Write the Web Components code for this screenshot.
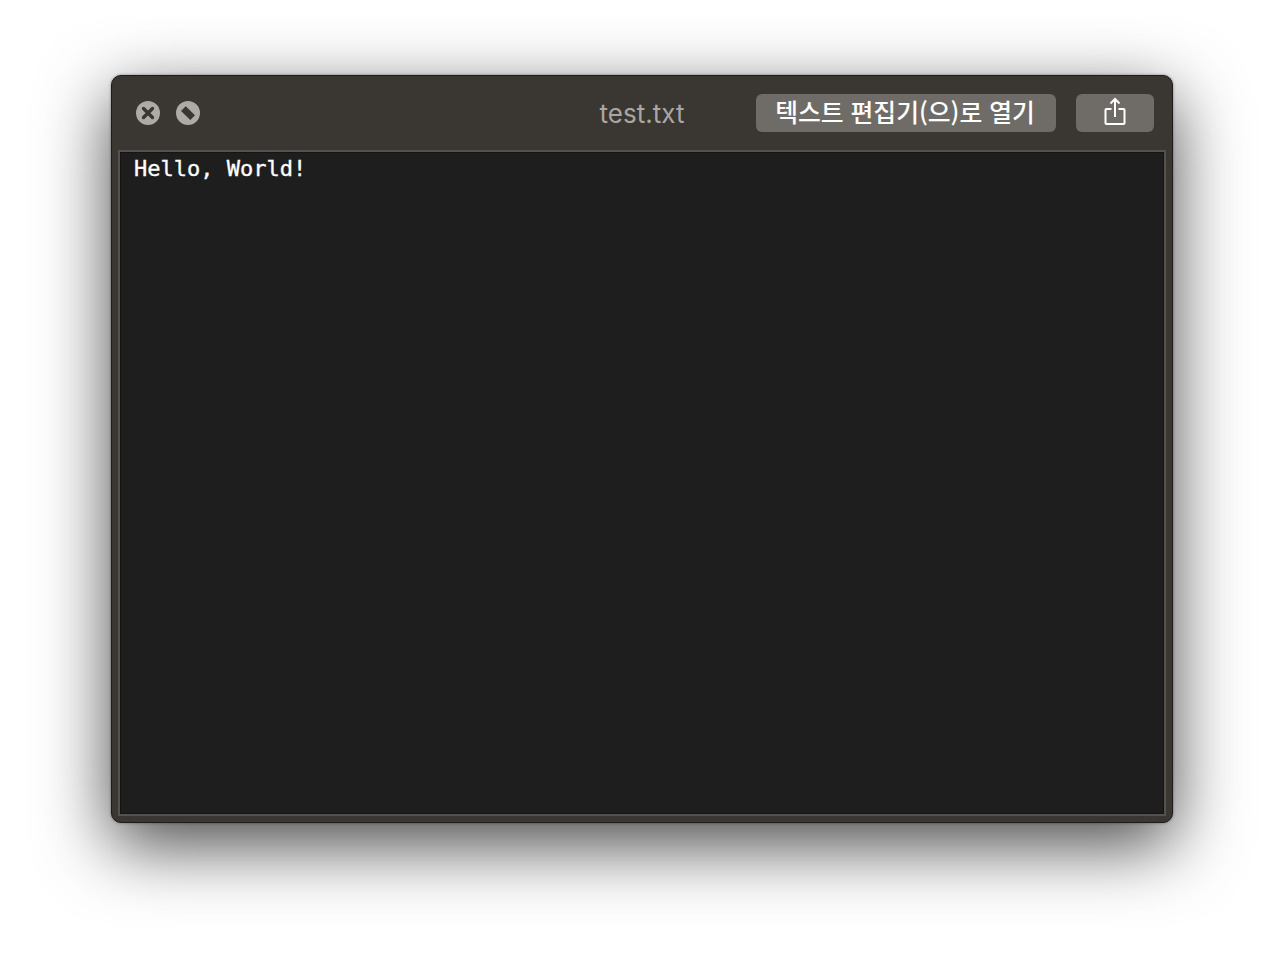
<!DOCTYPE html>
<html lang="ko">
<head>
<meta charset="utf-8">
<title>test.txt</title>
<style>
html, body { margin: 0; height: 100%; background: #fff; overflow: hidden; }
body { padding: 75px 111px 0; box-sizing: border-box; }
</style>
</head>
<body>
<preview-window>
  <circle-button slot="left" kind="close"></circle-button>
  <circle-button slot="left" kind="block"></circle-button>
  <span slot="title">test.txt</span>
  <bar-button slot="right" style="width:300px;padding-right:2px">텍스트 편집기(으)로 열기</bar-button>
  <bar-button slot="right" style="width:78px">
    <svg width="24" height="30" viewBox="0 0 24 30" fill="none" stroke="#fff" stroke-width="2">
      <path d="M8.500 13H3.500a1 1 0 0 0-1 1V27a1 1 0 0 0 1 1h17a1 1 0 0 0 1-1V14a1 1 0 0 0-1-1H15.500"/>
      <path d="M12 21V3M7.500 7.500 12 3l4.500 4.500"/>
    </svg>
  </bar-button>
  <text-pane>Hello, World!</text-pane>
</preview-window>
<script>
class PreviewWindow extends HTMLElement {
  constructor() {
    super();
    this.attachShadow({mode: 'open'});
    this.shadowRoot.innerHTML = `
      <style>
      :host {
        display: flex;
        flex-direction: column;
        box-sizing: border-box;
        width: 1062px;
        height: 748px;
        background: #3a3631;
        border: 1px solid #1d1c1a;
        border-radius: 10px;
        box-shadow: 0 22px 70px rgba(0,0,0,.72), 0 0 3px rgba(0,0,0,.4);
        padding: 0 6px 6px;
      }
      .bar {
        flex: none;
        height: 74px;
        display: grid;
        grid-template-columns: 1fr auto 1fr;
        align-items: center;
        padding: 0 12px;
        color: #aaa7a2;
        font: 26px "Inter", "Noto Sans", sans-serif;
      }
      .left { display: flex; gap: 16px; padding-left: 6px; }
      .right { display: flex; gap: 20px; justify-content: flex-end; }
      .pane { flex: 1; min-height: 0; display: flex; }
      </style>
      <div class="bar">
        <div class="left"><slot name="left"></slot></div>
        <div class="title"><slot name="title"></slot></div>
        <div class="right"><slot name="right"></slot></div>
      </div>
      <div class="pane"><slot></slot></div>
    `;
  }
}

class CircleButton extends HTMLElement {
  constructor() {
    super();
    this.attachShadow({mode: 'open'});
  }
  connectedCallback() {
    const glyph = this.getAttribute('kind') === 'close'
      ? '<path d="M7.500 7.500l9 9M16.500 7.500l-9 9" stroke="#3a3631" stroke-width="3.400" stroke-linecap="round"/>'
      : '<path d="M5 10 9.700 5.300 19 14.300 14.300 19Z" fill="#3a3631"/>';
    this.shadowRoot.innerHTML = `
      <style>
      :host { display: block; width: 24px; height: 24px; }
      svg { display: block; }
      </style>
      <svg width="24" height="24" viewBox="0 0 24 24"><circle cx="12" cy="12" r="12" fill="#aeaba6"/>${glyph}</svg>
    `;
  }
}

class BarButton extends HTMLElement {
  constructor() {
    super();
    this.attachShadow({mode: 'open'});
    this.shadowRoot.innerHTML = `
      <style>
      :host {
        display: flex;
        align-items: center;
        justify-content: center;
        box-sizing: border-box;
        height: 38px;
        background: #6f6c67;
        border-radius: 6px;
        color: #fff;
        font: 500 24.8px/38px "Noto Sans CJK KR", "Noto Sans", sans-serif;
        white-space: nowrap;
      }
      .label { position: relative; top: -2px; display: flex; }
      </style>
      <span class="label"><slot></slot></span>
    `;
  }
}

class TextPane extends HTMLElement {
  constructor() {
    super();
    this.attachShadow({mode: 'open'});
    this.shadowRoot.innerHTML = `
      <style>
      :host {
        display: block;
        flex: 1;
        box-sizing: border-box;
        background: #1e1e1e;
        border: 2px solid #55524e;
        box-shadow: inset 0 0 0 1px #141414;
        color: #fff;
        font: 22px/32px "DejaVu Sans Mono", monospace;
        -webkit-text-stroke: .35px #fff;
        padding: 1px 14px;
      }
      </style>
      <slot></slot>
    `;
  }
}

customElements.define('preview-window', PreviewWindow);
customElements.define('circle-button', CircleButton);
customElements.define('bar-button', BarButton);
customElements.define('text-pane', TextPane);
</script>
</body>
</html>
